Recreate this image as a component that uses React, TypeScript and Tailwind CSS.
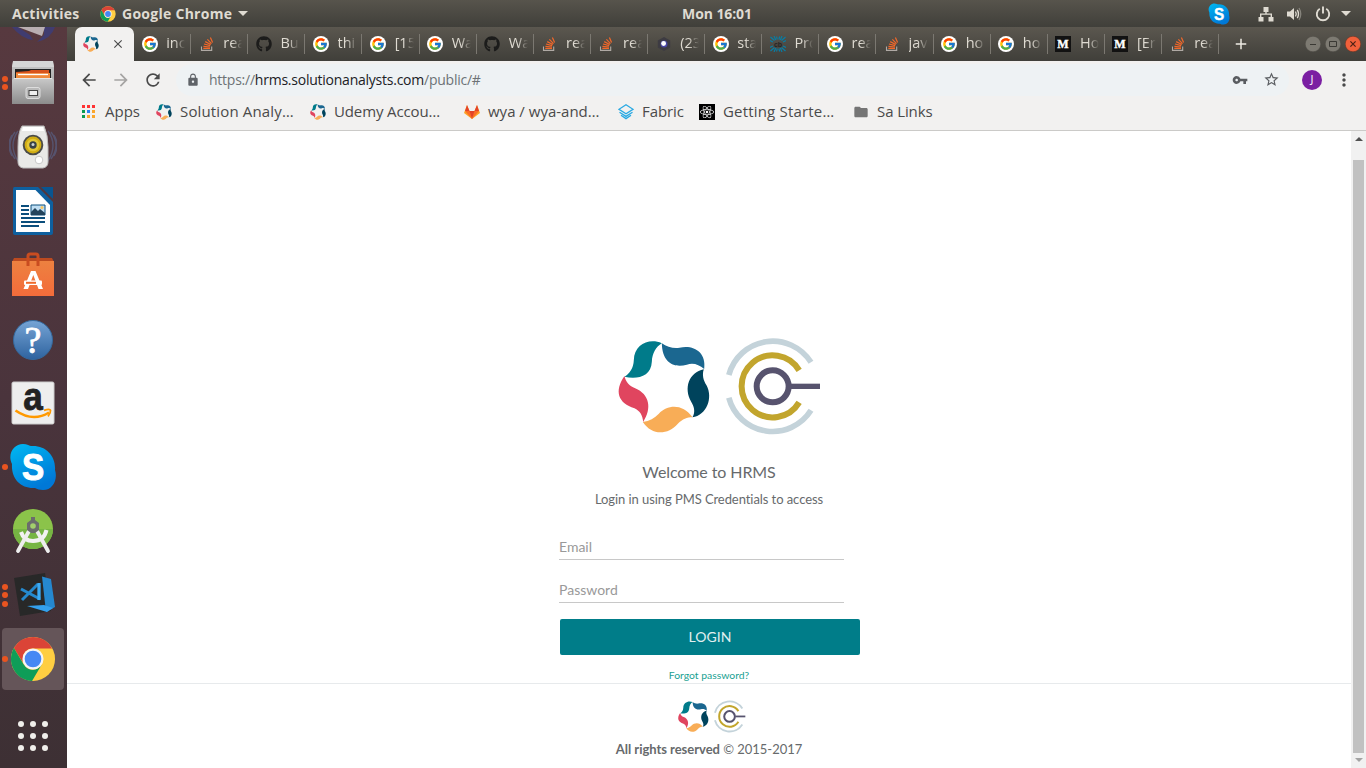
import React from "react";
import { FcGoogle } from "react-icons/fc";
import { FaGithub, FaReact } from "react-icons/fa";
import {
  MdArrowBack,
  MdArrowForward,
  MdRefresh,
  MdLock,
  MdVpnKey,
  MdStarBorder,
  MdMoreVert,
  MdFolder,
  MdClose,
  MdAdd,
} from "react-icons/md";

const Star = () => (
  <g transform="translate(-1.5 0)">
    <path fill="#007b8a" d="M187 55C150 38 104 58 103 105C102 130 90 146 75 155C112 164 155 155 157 110C158 85 170 65 187 55Z" />
    <path fill="#1b6790" d="M187 55C202 66 225 72 240 68C280 58 322 80 314 132C298 118 280 112 262 119C225 130 188 115 187 55Z" />
    <path fill="#00435c" d="M313 133C307 150 312 167 321 181C342 220 320 272 279 277C289 260 283 243 275 230C252 190 268 142 313 133Z" />
    <path fill="#f8ad57" d="M279 277C262 277 250 282 235 296C205 330 158 333 130 291C150 288 165 279 178 266C205 238 250 236 279 277Z" />
    <path fill="#e0455f" d="M131 291C130 270 120 257 105 250C56 235 43 198 75 153C78 170 90 183 107 190C150 208 158 250 131 291Z" />
  </g>
);

const StarIcon = ({ className }: { className: string }) => (
  <svg viewBox="55 45 275 280" className={className}><Star /></svg>
);

const BrandLogo = ({ className }: { className: string }) => (
  <svg viewBox="0 0 720 360" className={className}>
    <Star />
    <g fill="none">
      <circle cx="518" cy="184" r="48" stroke="#57536e" strokeWidth="18" />
      <path d="M570 184H660" stroke="#57536e" strokeWidth="16" />
      <path d="M597.5 136A93 93 0 1 0 597.5 232" stroke="#c2a52d" strokeWidth="18" />
      <path d="M386.5 150A136 136 0 0 1 633 112" stroke="#c4d3da" strokeWidth="17" />
      <path d="M386.5 218A136 136 0 0 0 633 256" stroke="#c4d3da" strokeWidth="17" />
    </g>
  </svg>
);

const ChromeIcon = ({ className }: { className: string }) => (
  <svg viewBox="0 0 48 48" className={className}>
    <circle cx="24" cy="24" r="23" fill="#ffce42" />
    <path fill="#db4437" d="M24 1A23 23 0 0 1 43.9 13H24A11 11 0 0 0 14.5 18.5L13 27L4.1 12.5A23 23 0 0 1 24 1Z" />
    <path fill="#0f9d58" d="M4.1 12.5L14.5 30A11 11 0 0 0 29 34L33 30L23 47A23 23 0 0 1 4.1 12.5Z" />
    <circle cx="24" cy="24" r="11" fill="#f5f5f5" />
    <circle cx="24" cy="24" r="8.7" fill="#4688f4" />
  </svg>
);

const SkypeIcon = ({ className }: { className: string }) => (
  <svg viewBox="0 0 48 48" className={className}>
    <defs>
      <linearGradient id="sky" x1="0" y1="0" x2=".5" y2="1">
        <stop offset="0" stopColor="#00b9f2" />
        <stop offset="1" stopColor="#0078d7" />
      </linearGradient>
    </defs>
    <path fill="url(#sky)" d="M14 1C18 1 21 3 22 3C37 2 47 13 46 27C49 36 44 47 34 47C31 47 28 46 26 45C12 46 2 36 3 21C-2 11 5 1 14 1Z" />
    <text transform="translate(24 37.2) scale(.9 1)" textAnchor="middle" fontFamily="Liberation Sans, sans-serif" fontWeight="bold" fontSize="37" fill="#fff" stroke="#fff" strokeWidth="1">S</text>
  </svg>
);

const StackIcon = () => (
  <svg viewBox="0 0 16 16" className="size-4 shrink-0" fill="none">
    <path d="M2.5 10.5V14.4H12.7V10.5" stroke="#b0aaa5" strokeWidth="1.1" />
    <path d="M4.3 12.4H11M4.4 10.3L11 11M5 8L11.2 9.6M6.2 5.6L11.8 8.5M8.4 3.3L12.5 7.6M11.4 1.4L13.6 6.5" stroke="#f2682a" strokeWidth="1.2" />
  </svg>
);

const MediumIcon = () => (
  <svg viewBox="0 0 16 16" className="size-4 shrink-0">
    <path fill="#121212" d="M0 0H16V16H0Z" />
    <text x="8" y="12" textAnchor="middle" fontFamily="Liberation Serif, serif" fontWeight="bold" fontSize="12" fill="#fff" stroke="#fff" strokeWidth=".4">M</text>
  </svg>
);

const CircuitIcon = () => (
  <svg viewBox="0 0 16 16" className="size-4 shrink-0">
    <path d="M.5 1L4.5 4.5M4 0L5.8 4M6.6 .5L7.2 3.5M9.6 .5L8.9 3.5M12 0L10.3 4M15.5 1L11.5 4.5M0 4.5L3 6M16 4.5L13 6M.5 15L4.5 11.5M4 16L5.8 12M6.6 15.5L7.2 12.5M9.6 15.5L8.9 12.5M12 16L10.3 12M15.5 15L11.5 11.5M0 11.5L3 10M16 11.5L13 10" stroke="#087da5" strokeWidth="1.2" />
    <text x="8" y="10.5" textAnchor="middle" fontFamily="Liberation Sans, sans-serif" fontWeight="bold" fontSize="7" fill="#242424">cb</text>
  </svg>
);

const HexIcon = () => (
  <svg viewBox="0 0 16 16" className="size-4 shrink-0">
    <path d="M8 1L14.2 4.5V11.5L8 15L1.8 11.5V4.5Z" fill="#3d3b42" />
    <circle cx="8" cy="7.9" r="3.5" fill="#4845a0" />
    <circle cx="7.6" cy="7.5" r="2.4" fill="#fff" />
  </svg>
);

const GoogleIcon = () => (
  <span className="flex size-4 shrink-0 items-center justify-center rounded-full bg-white">
    <FcGoogle className="size-[14px]" />
  </span>
);

const GithubIcon = () => <FaGithub className="size-4 shrink-0 text-[#1c1c1b]" />;

const icons: Record<string, React.FC> = {
  g: GoogleIcon,
  so: StackIcon,
  gh: GithubIcon,
  m: MediumIcon,
  cb: CircuitIcon,
  hex: HexIcon,
};

const tabs: [string, string][] = [
  ["g", "inc"], ["so", "rea"], ["gh", "Bu"], ["g", "thi"], ["g", "[15"], ["g", "Wa"], ["gh", "Wa"],
  ["so", "rea"], ["so", "rea"], ["hex", "(23"], ["g", "sta"], ["cb", "Pro"], ["g", "rea"], ["so", "jav"],
  ["g", "ho"], ["g", "ho"], ["m", "Ho"], ["m", "[Er"], ["so", "rea"],
];

const TopBar = () => (
  <header className="flex h-[27px] shrink-0 items-center bg-linear-to-b from-[#57544c] to-[#403f3a] text-[14px] font-bold text-[#dfdbd2]">
    <div className="flex w-[660px] items-center pl-3">
      <span className="w-[88px] whitespace-nowrap tracking-[0.25px]">Activities</span>
      <ChromeIcon className="size-4" />
      <span className="ml-[6px] whitespace-nowrap tracking-[0.27px]">Google Chrome</span>
      <svg viewBox="0 0 10 5" className="ml-[6px] h-[5px] w-[10px] fill-[#dfdbd2]"><path d="M0 0H10L5 5Z" /></svg>
    </div>
    <div className="w-[114px] text-center whitespace-nowrap tracking-[-0.1px]">Mon 16:01</div>
    <div className="ml-auto flex items-center pr-[15px]">
      <SkypeIcon className="mr-7 size-[22px]" />
      <svg viewBox="0 0 16 16" className="mr-[12px] size-4 fill-[#dfdbd2]">
        <path d="M5.5 1H10.5V6H8.7V7.5H14V11H15.5V15.5H10.5V11H12.6V8.7H3.4V11H5.5V15.5H.5V11H2V7.5H7.3V6H5.5Z" />
      </svg>
      <svg viewBox="0 0 16 16" className="mr-[13px] size-4" fill="none" stroke="#dfdbd2">
        <path d="M1 5.5H4L8 2V14L4 10.5H1Z" fill="#dfdbd2" stroke="none" />
        <path d="M9.5 5.5Q11 8 9.5 10.5M11.3 3.8Q13.7 8 11.3 12.2" strokeWidth="1.4" />
        <path d="M13 2Q16.5 8 13 14" strokeWidth="1.3" opacity=".4" />
      </svg>
      <svg viewBox="0 0 16 16" className="mr-[10px] size-4" fill="none" stroke="#dfdbd2" strokeWidth="1.9">
        <path d="M8 .5V7.5M4.8 2.8A6.2 6.2 0 1 0 11.2 2.8" />
      </svg>
      <svg viewBox="0 0 10 5" className="h-[5px] w-[10px] fill-[#dfdbd2]"><path d="M0 0H10L5 5Z" /></svg>
    </div>
  </header>
);

const FilesIcon = () => (
  <svg viewBox="0 0 48 48" className="size-12">
    <defs><linearGradient id="cab" x1="0" y1="0" x2="0" y2="1"><stop offset="0" stopColor="#c9c9c9" /><stop offset="1" stopColor="#8c8c8c" /></linearGradient></defs>
    <path d="M4 3H44L45 8V43H3V8Z" fill="url(#cab)" />
    <path d="M4 2H44L45 8H3Z" fill="#d6d6d6" />
    <path d="M6 10H42V22H6Z" fill="#222" />
    <path d="M7 13L20 12L22 11H40V20H7Z" fill="#d9541d" />
    <path d="M7 14H41V20H7Z" fill="#f08a3c" />
    <path d="M9 15.5H39" stroke="#fff" strokeWidth="1.3" />
    <path d="M5 19H43L45 21V45H3V21Z" fill="url(#cab)" />
    <path d="M5 19.5H43" stroke="#e6e6e6" />
    <rect x="17" y="28.5" width="14" height="11" rx="2" fill="#b9b9b9" stroke="#ddd" />
    <rect x="20" y="31.5" width="8.5" height="5" fill="#eee" stroke="#444" />
  </svg>
);

const RhythmboxIcon = () => (
  <svg viewBox="0 0 48 48" className="size-12">
    <g fill="none" stroke="#5a6a94" strokeWidth="1.4" opacity=".55">
      <path d="M9 8Q-1 22 9 38M6 9Q-4 22 6 36M3 12Q-3 22 3 33M39 8Q49 22 39 38M42 9Q52 22 42 36M45 12Q51 22 45 33" />
    </g>
    <path d="M13 3H35Q39 12 39 24V39Q39 44 34 45H14Q9 44 9 39V24Q9 9 13 3Z" fill="#e9e9e7" stroke="#bbb" />
    <path d="M14 4H34L35 8H13Z" fill="#fff" />
    <circle cx="24" cy="22" r="10.3" fill="#4a4b48" />
    <circle cx="24" cy="22" r="8.4" fill="#d0ac13" />
    <circle cx="24" cy="22" r="6.3" fill="#e3c635" />
    <circle cx="24" cy="22" r="3.7" fill="#394146" />
    <circle cx="24" cy="21.5" r="1.5" fill="#cbd2d5" />
    <circle cx="30" cy="37" r="3.8" fill="#fff" stroke="#c8c8c8" />
  </svg>
);

const WriterIcon = () => (
  <svg viewBox="0 0 48 48" className="size-12">
    <path d="M5.5 0H29L44 15V46Q44 48 42 48H6Q4 48 4 46V2Q4 0 5.5 0Z" fill="#0e609f" />
    <path d="M7 3H26.5L41 18V45H7Z" fill="#fff" />
    <path d="M32 0H44V12Z" fill="#095590" />
    <path d="M12 19H20M12 23H20M12 27H20M12 31H36M12 35H36M12 39H30" stroke="#0b4e7c" strokeWidth="1.9" />
    <path d="M22 18H36V28H22Z" fill="#bfdef3" stroke="#0b4e7c" />
    <path d="M22 28V25L26 21L29 24L31 22L36 26V28Z" fill="#23445c" />
    <circle cx="33" cy="20.5" r="1.5" fill="#fbc75d" />
  </svg>
);

const SoftwareIcon = () => (
  <svg viewBox="0 0 48 48" className="size-12">
    <defs><linearGradient id="bag" x1="0" y1="0" x2="0" y2="1"><stop offset="0" stopColor="#ed8140" /><stop offset="1" stopColor="#f36c3b" /></linearGradient></defs>
    <path d="M5 7H43L45 11H3Z" fill="#bc4a20" />
    <path d="M3 10H45V45H3Z" fill="url(#bag)" />
    <path d="M19 15V5Q19 3 21 3H27Q29 3 29 5V15" fill="none" stroke="#c94c20" strokeWidth="3" />
    <path d="M22 20H26.5L34 38H29.5L24.3 24L19 38H14.5Z" fill="#fff" />
    <rect x="15" y="29.5" width="18" height="4.6" rx="1" fill="#fff" />
    <path d="M17 31.8H27" stroke="#ef6b2d" strokeWidth="2" />
  </svg>
);

const HelpIcon = () => (
  <svg viewBox="0 0 48 48" className="size-12">
    <defs><linearGradient id="hlp" x1="0" y1="0" x2="0" y2="1"><stop offset="0" stopColor="#76a4d5" /><stop offset="1" stopColor="#2e639f" /></linearGradient></defs>
    <circle cx="24" cy="25" r="19.5" fill="url(#hlp)" stroke="#34699d" />
    <text x="24" y="38" textAnchor="middle" fontFamily="Liberation Serif, serif" fontSize="38" fill="#fff" stroke="#fff" strokeWidth=".8">?</text>
  </svg>
);

const AmazonIcon = () => (
  <svg viewBox="0 0 48 48" className="size-12">
    <rect x="3" y="3" width="42" height="42" rx="1.5" fill="#eee" stroke="#ccc" />
    <text transform="translate(24 31.3) scale(.9 1)" textAnchor="middle" fontFamily="Liberation Sans, sans-serif" fontWeight="bold" fontSize="39" fill="#222" stroke="#222" strokeWidth=".8">a</text>
    <path d="M6.5 31.5Q24 43.5 40 33.5" fill="none" stroke="#f90" strokeWidth="2.6" />
    <path d="M35 31.3Q41 29.5 41.5 31.3Q41.8 34 39 37.3" fill="none" stroke="#f90" strokeWidth="1.8" />
  </svg>
);

const AndroidStudioIcon = () => (
  <svg viewBox="0 0 48 48" className="size-12">
    <circle cx="24" cy="22" r="20" fill="#8bc34a" />
    <path d="M4 22A20 20 0 0 0 44 22Z" fill="#76b543" />
    <path d="M12 25Q15 34 24 34Q35 34 37.5 23" fill="none" stroke="#f2f2f2" strokeWidth="4" />
    <path d="M20 24L9 44M28 24L39 44" stroke="#eee" strokeWidth="3.8" strokeLinecap="round" />
    <path d="M22 10H26V13L30 16V23L26 26H22L18 23V16L22 13Z" fill="#6b6c6c" />
    <circle cx="24" cy="19" r="2.8" fill="#a3cf6c" />
  </svg>
);

const CodeIcon = () => (
  <svg viewBox="0 0 48 48" className="size-12">
    <path d="M5 7L36 2L42 40L11 45Z" fill="#282828" />
    <path d="M33 5.5L42 8L46 36L37 41Z" fill="#2588d0" />
    <path d="M38 41L44 37L35 34L18 35Z" fill="#34a0ed" />
    <path d="M12 18L31 28M13 29L29 13" stroke="#2589ce" strokeWidth="3" />
    <path d="M30 12V29" stroke="#3cabf4" strokeWidth="3.3" />
  </svg>
);

const launchers: { name: string; Icon: React.FC; dots: number }[] = [
  { name: "files", Icon: FilesIcon, dots: 2 },
  { name: "rhythmbox", Icon: RhythmboxIcon, dots: 0 },
  { name: "writer", Icon: WriterIcon, dots: 0 },
  { name: "software", Icon: SoftwareIcon, dots: 0 },
  { name: "help", Icon: HelpIcon, dots: 0 },
  { name: "amazon", Icon: AmazonIcon, dots: 0 },
  { name: "skype", Icon: () => <SkypeIcon className="size-12" />, dots: 1 },
  { name: "studio", Icon: AndroidStudioIcon, dots: 0 },
  { name: "code", Icon: CodeIcon, dots: 3 },
  { name: "chrome", Icon: () => <ChromeIcon className="size-[46px]" />, dots: 1 },
];

const Dock = () => (
  <aside className="flex w-[67px] shrink-0 flex-col bg-linear-to-b from-[#57393f] via-[#4a343c] to-[#3d3034]">
    <svg viewBox="0 0 67 24" className="h-6 w-[67px] shrink-0">
      <path d="M12 0Q22 12 33 13L30 8L18 0ZM44 0H55Q51 12 37 15L44 8Z" fill="#403c70" />
      <path d="M18 0H45L42 9Z" fill="#b9afb2" />
    </svg>
    {launchers.map(({ name, Icon, dots }) => (
      <div key={name} className="flex h-16 shrink-0 items-center px-[2px]">
        <div className={name === "chrome" ? "flex h-[62px] w-[62px] items-center rounded-[4px] bg-[#655559]" : "flex h-[62px] w-[62px] items-center"}>
          <div className="flex w-[7px] shrink-0 flex-col items-start gap-[2.5px]">
            {Array.from({ length: dots }, (_, i) => (
              <span key={i} className="size-[6px] rounded-full bg-[#e95420]" />
            ))}
          </div>
          <div className="flex w-12 shrink-0 justify-center"><Icon /></div>
        </div>
      </div>
    ))}
    <div className="grid grid-cols-[repeat(3,6px)] gap-[6px] pt-[30px] pl-[18px]">
      {Array.from({ length: 9 }, (_, i) => (
        <span key={i} className="size-[6px] rounded-full bg-[#f0efeb]" />
      ))}
    </div>
  </aside>
);

const TabStrip = () => (
  <div className="flex h-[34px] shrink-0 items-stretch bg-linear-to-b from-[#5b574f] to-[#403f3a] pl-2">
    <div className="flex w-[59px] shrink-0 items-center rounded-t-[7px] bg-[#f2f1f0] pl-2">
      <StarIcon className="size-4" />
      <MdClose className="ml-[12px] size-[14px] text-[#4a4a4a]" />
    </div>
    {tabs.map(([kind, label], i) => {
      const Icon = icons[kind];
      return (
        <div key={i} className="flex w-[57.12px] shrink-0 items-center pl-[7.6px]">
          <Icon />
          <span className="ml-[8.6px] w-[19px] overflow-hidden mask-r-from-45% pb-[2px] text-[14.5px] whitespace-nowrap text-[#dfdbd2]">{label}</span>
          <span className="ml-auto h-5 w-px bg-[#7b7871]" />
        </div>
      );
    })}
    <MdAdd className="ml-[13px] size-[18px] self-center text-[#eeebe4]" />
    <div className="mr-[5px] ml-auto flex items-center gap-1">
      {["M5 8.5H11", "M4.5 5.5H11.5V10.5H4.5Z"].map((d) => (
        <svg key={d} viewBox="0 0 16 16" className="size-4"><circle cx="8" cy="8" r="7.8" fill="#7d7a72" stroke="#4a4943" strokeWidth=".5" /><path d={d} fill="none" stroke="#3a3934" /></svg>
      ))}
      <svg viewBox="0 0 16 16" className="size-4"><circle cx="8" cy="8" r="7.8" fill="#f0603b" stroke="#5c2e20" strokeWidth=".5" /><path d="M5.4 5.4L10.6 10.6M10.6 5.4L5.4 10.6" stroke="#4b2015" strokeWidth="1.2" /></svg>
    </div>
  </div>
);

const Toolbar = () => (
  <div className="flex h-[37px] shrink-0 items-center pl-3 text-[#4a4a4a]">
    <MdArrowBack className="size-5" />
    <MdArrowForward className="ml-3 size-5 text-[#a5a4a3]" />
    <MdRefresh className="ml-3 size-5" />
    <div className="ml-[13px] flex h-[32px] w-[1113px] items-center rounded-full bg-[#eef2f4] pr-[9px] pl-[10px]">
      <MdLock className="size-[14px] text-[#5f6368]" />
      <div className="ml-[9px] text-[14px] leading-7 whitespace-nowrap tracking-[-0.24px] text-[#6d7276]">
        https://<span className="text-[#202124]">hrms.solutionanalysts.com</span>/public/#
      </div>
      <MdVpnKey className="ml-auto size-4 text-[#5a5d61]" />
      <MdStarBorder className="ml-[15px] size-[17px] text-[#5a5d61]" />
    </div>
    <div className="ml-[13px] flex size-5 items-center justify-center rounded-full bg-[#7b1fa2] text-[11px] text-white">J</div>
    <MdMoreVert className="ml-[12px] size-5" />
  </div>
);

const Bookmarks = () => (
  <nav className="flex h-[33px] shrink-0 items-center border-b border-[#cbcac8] pb-[5px] text-[15px] whitespace-nowrap text-[#4a4a4a]">
    <div className="flex w-[89px] shrink-0 items-center pl-[15px]">
      <svg viewBox="0 0 13 13" className="size-[13px]">
        <path fill="#f33" d="M0 0H3V3H0ZM5 0H8V3H5ZM10 0H13V3H10Z" />
        <path fill="#0b9b50" d="M0 5H3V8H0ZM0 10H3V13H0Z" />
        <path fill="#2a82f0" d="M5 5H8V8H5Z" />
        <path fill="#fba62b" d="M10 5H13V8H10ZM5 10H8V13H5ZM10 10H13V13H10Z" />
      </svg>
      <span className="ml-[10px]">Apps</span>
    </div>
    <div className="flex w-[154px] shrink-0 items-center"><StarIcon className="size-4" /><span className="ml-2 tracking-[0.15px]">Solution Analy…</span></div>
    <div className="flex w-[154px] shrink-0 items-center"><StarIcon className="size-4" /><span className="ml-2 tracking-[-0.12px]">Udemy Accou…</span></div>
    <div className="flex w-[154px] shrink-0 items-center">
      <svg viewBox="0 0 16 16" className="size-4">
        <path fill="#fca326" d="M0 9L3 1L5.5 7H10.5L13 1L16 9L8 15Z" />
        <path fill="#fc6d26" d="M1 7L8 15L15 7H10L8 15L6 7Z" />
        <path fill="#e24329" d="M3 1L5.5 7H1ZM13 1L10.5 7H15ZM5.5 7H10.5L8 15Z" />
      </svg>
      <span className="ml-2">wya / wya-and…</span>
    </div>
    <div className="flex w-[81px] shrink-0 items-center">
      <svg viewBox="0 0 16 16" className="size-4" fill="none" stroke="#28a9e3" strokeWidth="1.3">
        <path d="M8 .8L15 5.3L8 9.8L1 5.3ZM1.5 8.2L8 12.4L14.5 8.2M3 11.2L8 14.6L13 11.2" />
      </svg>
      <span className="ml-2 tracking-[-0.1px]">Fabric</span>
    </div>
    <div className="flex w-[154px] shrink-0 items-center">
      <span className="flex size-4 items-center justify-center bg-black text-white"><FaReact className="size-[14px]" /></span>
      <span className="ml-2 tracking-[0.18px]">Getting Starte…</span>
    </div>
    <MdFolder className="size-4 text-[#757575]" />
    <span className="ml-2 tracking-[-0.1px]">Sa Links</span>
  </nav>
);

const LoginPage = () => (
  <main className="flex min-w-0 flex-1 flex-col items-center bg-white font-[Lato,sans-serif] text-[#676a6c]">
    <section className="flex h-[553px] w-full shrink-0 flex-col items-center border-b border-[#e7eaec] pt-[194px]">
      <div className="flex w-[300px] flex-col items-center">
        <BrandLogo className="ml-[22px] h-[120px] w-[240px] shrink-0" />
        <h3 className="mt-[15px] text-[16px] leading-6 whitespace-nowrap tracking-[-0.1px]">Welcome to HRMS</h3>
        <p className="mt-[5px] text-[13px] leading-[20px] whitespace-nowrap tracking-[-0.07px]">Login in using PMS Credentials to access</p>
        <form className="mt-[25px] flex w-full flex-col" onSubmit={(e) => e.preventDefault()}>
          <input type="email" placeholder="Email" className="h-[26px] w-[285px] border-b border-[#c8c8c8] text-[14px] outline-none placeholder:text-[#999]" />
          <input type="password" placeholder="Password" className="mt-[17px] h-[26px] w-[285px] border-b border-[#c8c8c8] text-[14px] outline-none placeholder:text-[#999]" />
          <button className="mt-4 -mr-px ml-px h-9 rounded-[2px] bg-[#007d89] pb-[2px] text-[14px] text-[#e0eff0]">LOGIN</button>
        </form>
        <a href="#" className="mt-[12px] text-[10.4px] leading-4 whitespace-nowrap text-[#1a9f92]">Forgot password?</a>
      </div>
    </section>
    <footer className="flex flex-col items-center pt-[12px] text-[13px]">
      <BrandLogo className="ml-[7px] h-10 w-20" />
      <div className="mt-[3px] leading-5 whitespace-nowrap tracking-[-0.03px]"><b>All rights reserved</b> © 2015-2017</div>
    </footer>
  </main>
);

const Scrollbar = () => (
  <div className="flex w-[15px] shrink-0 flex-col items-center bg-[#f1f1f1]">
    <svg viewBox="0 0 8 4" className="mt-[6px] h-1 w-2 fill-[#505050]"><path d="M4 0L8 4H0Z" /></svg>
    <div className="mt-[19px] h-[593px] w-[11px] bg-[#c1c1c1]" />
    <svg viewBox="0 0 8 4" className="mt-[5px] h-1 w-2 fill-[#a3a3a3]"><path d="M0 0H8L4 4Z" /></svg>
  </div>
);

export default function App() {
  return (
    <div className="flex h-[768px] w-[1366px] flex-col overflow-hidden font-['Open_Sans','Noto_Sans',sans-serif]">
      <TopBar />
      <div className="flex min-h-0 flex-1">
        <Dock />
        <div className="flex min-w-0 flex-1 flex-col bg-[#f2f1f0]">
          <TabStrip />
          <Toolbar />
          <Bookmarks />
          <div className="flex min-h-0 flex-1">
            <LoginPage />
            <Scrollbar />
          </div>
        </div>
      </div>
    </div>
  );
}
